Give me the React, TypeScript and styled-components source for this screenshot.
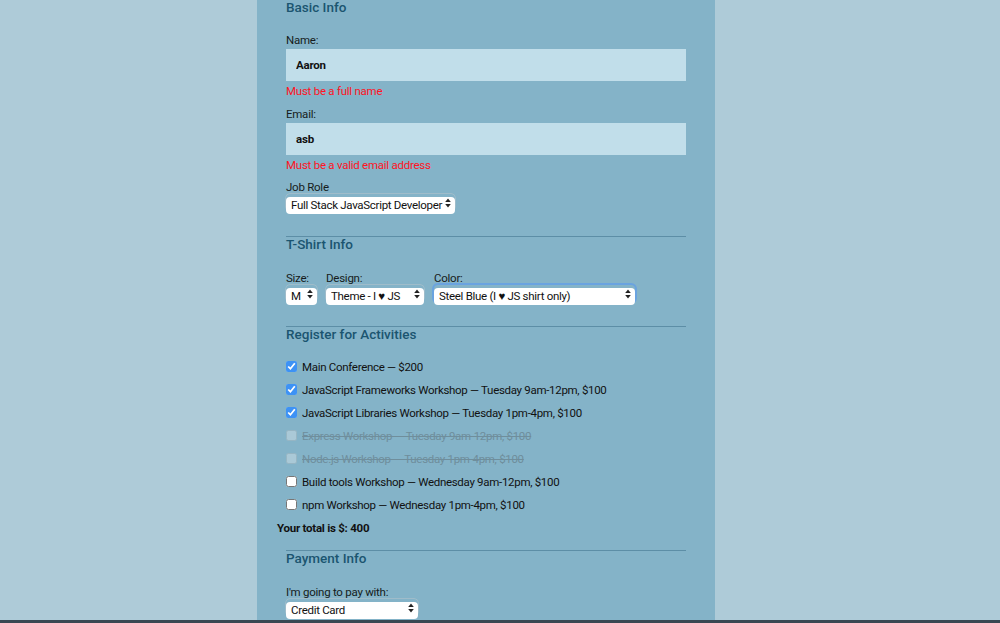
import React from "react";
import styled, { createGlobalStyle } from "styled-components";

const GlobalStyle = createGlobalStyle`
  html, body {
    margin: 0;
    padding: 0;
    background: #aecbd8;
  }
  body {
    font-family: Roboto, "Liberation Sans", Arial, sans-serif;
    overflow: hidden;
  }
`;

const activities = [
  { label: "Main Conference — $200", checked: true },
  { label: "JavaScript Frameworks Workshop — Tuesday 9am-12pm, $100", checked: true },
  { label: "JavaScript Libraries Workshop — Tuesday 1pm-4pm, $100", checked: true },
  { label: "Express Workshop — Tuesday 9am-12pm, $100", disabled: true },
  { label: "Node.js Workshop — Tuesday 1pm-4pm, $100", disabled: true },
  { label: "Build tools Workshop — Wednesday 9am-12pm, $100" },
  { label: "npm Workshop — Wednesday 1pm-4pm, $100" },
];

function Arrows() {
  return (
    <ArrowIcon width="6" height="10" viewBox="0 0 6 10">
      <path d="M3 0.5 L5.8 4 L0.2 4 Z" fill="#222" />
      <path d="M3 9.5 L5.8 6 L0.2 6 Z" fill="#222" />
    </ArrowIcon>
  );
}

function Select({ value, width, focused }: { value: string; width: number; focused?: boolean }) {
  return (
    <SelectWrap $width={width} $focused={focused}>
      <NativeSelect defaultValue={value}>
        <option>{value}</option>
      </NativeSelect>
      <Arrows />
    </SelectWrap>
  );
}

function App() {
  return (
    <Page>
      <GlobalStyle />
      <Panel>
        <Heading>Basic Info</Heading>
        <Label $top={19}>Name:</Label>
        <TextInput defaultValue="Aaron" />
        <ErrorText>Must be a full name</ErrorText>
        <Label $top={9}>Email:</Label>
        <TextInput defaultValue="asb" />
        <ErrorText>Must be a valid email address</ErrorText>
        <Label $top={8}>Job Role</Label>
        <Select value="Full Stack JavaScript Developer" width={169} />

        <Rule $top={25} />
        <Heading>T-Shirt Info</Heading>
        <ShirtRow>
          <Field>
            <Label $top={0}>Size:</Label>
            <Select value="M" width={31} />
          </Field>
          <Field>
            <Label $top={0}>Design:</Label>
            <Select value="Theme - I ♥ JS" width={98} />
          </Field>
          <Field>
            <Label $top={0}>Color:</Label>
            <Select value="Steel Blue (I ♥ JS shirt only)" width={201} focused />
          </Field>
        </ShirtRow>

        <Rule $top={24} />
        <Heading>Register for Activities</Heading>
        <ActivityList>
          {activities.map((a) => (
            <ActivityRow key={a.label} $disabled={a.disabled}>
              <Check type="checkbox" defaultChecked={a.checked} disabled={a.disabled} />
              <span>{a.label}</span>
            </ActivityRow>
          ))}
        </ActivityList>
        <Total>Your total is $: 400</Total>

        <Rule $top={15} />
        <Heading>Payment Info</Heading>
        <Label $top={20}>I'm going to pay with:</Label>
        <Select value="Credit Card" width={132} />
      </Panel>
    </Page>
  );
}

export default App;

const Page = styled.div`
  height: 623px;
  box-sizing: border-box;
  border-bottom: 3px solid #3a4752;
  padding-left: 257px;
  display: flex;
  overflow: hidden;
`;

const Panel = styled.main`
  width: 458px;
  box-sizing: border-box;
  background: #84b3c8;
  padding: 0 29px;
  display: flex;
  flex-direction: column;
  align-items: flex-start;
`;

const Heading = styled.h2`
  margin: 0;
  font-size: 13.5px;
  font-weight: 500;
  line-height: 14px;
  color: #1b5570;
`;

const Label = styled.label<{ $top: number }>`
  display: block;
  margin-top: ${(p) => p.$top}px;
  font-size: 11.5px;
  letter-spacing: -0.25px;
  line-height: 14px;
  color: #161c20;
`;

const TextInput = styled.input`
  margin-top: 2px;
  width: 400px;
  height: 32px;
  box-sizing: border-box;
  border: none;
  outline: none;
  background: #c1deea;
  padding: 0 10px;
  font-family: Roboto, "Liberation Sans", Arial, sans-serif;
  font-size: 11.5px;
  letter-spacing: -0.2px;
  font-weight: 700;
  color: #111;
`;

const ErrorText = styled.p`
  margin: 3px 0 0;
  font-size: 11.5px;
  letter-spacing: -0.25px;
  line-height: 14px;
  color: #ff1424;
`;

const SelectWrap = styled.div<{ $width: number; $focused?: boolean }>`
  position: relative;
  margin-top: 0;
  width: ${(p) => p.$width}px;
  height: 17px;
  border-radius: 4px;
  box-shadow: ${(p) => (p.$focused ? "0 0 0 2px #6aa3e0" : "0 0 0 0.5px #b9c6cc")};
`;

const NativeSelect = styled.select`
  appearance: none;
  -webkit-appearance: none;
  width: 100%;
  height: 100%;
  box-sizing: border-box;
  border: none;
  border-radius: 4px;
  background: #fff;
  padding: 0 10px 0 5px;
  font-family: Roboto, "Liberation Sans", Arial, sans-serif;
  font-size: 11.5px;
  letter-spacing: -0.3px;
  line-height: 17px;
  color: #111;
  outline: none;
`;

const ArrowIcon = styled.svg`
  position: absolute;
  right: 4px;
  top: 4px;
  pointer-events: none;
`;

const ShirtRow = styled.div`
  margin-top: 20px;
  display: flex;
  gap: 9px;
  align-items: flex-start;
  & > div + div + div {
    margin-left: 1px;
  }
`;

const Field = styled.div`
  display: flex;
  flex-direction: column;
  align-items: flex-start;
`;

const Rule = styled.hr<{ $top: number }>`
  margin: ${(p) => p.$top}px 0 0;
  width: 400px;
  border: none;
  border-top: 1px solid #5d8ea6;
  height: 0;
`;

const ActivityList = styled.div`
  margin-top: 14px;
  display: flex;
  flex-direction: column;
`;

const ActivityRow = styled.label<{ $disabled?: boolean }>`
  height: 23px;
  display: flex;
  align-items: center;
  gap: 5px;
  font-size: 11.5px;
  letter-spacing: -0.3px;
  color: ${(p) => (p.$disabled ? "#6f8e9c" : "#111")};
  text-decoration: ${(p) => (p.$disabled ? "line-through" : "none")};
`;

const Check = styled.input`
  margin: 0;
  width: 11px;
  height: 11px;
  accent-color: #3d92f5;
  &:disabled {
    opacity: 0.5;
  }
`;

const Total = styled.p`
  margin: 5px 0 0 -9px;
  font-size: 11.5px;
  letter-spacing: -0.25px;
  line-height: 14px;
  font-weight: 700;
  color: #111;
`;
